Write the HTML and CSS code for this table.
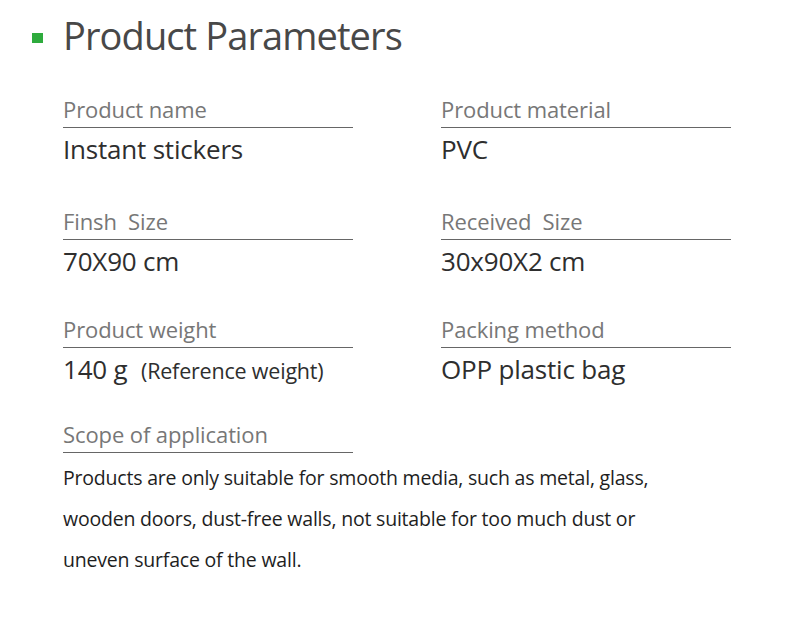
FILE: index.html
```html
<!DOCTYPE html>
<html lang="en">
<head>
<meta charset="utf-8">
<title>Product Parameters</title>
<link rel="stylesheet" href="styles.css">
</head>
<body>
<div class="page">
  <header class="heading">
    <span class="mark"></span>
    <h1 class="title">Product Parameters</h1>
  </header>
  <div class="params">
    <div class="row row-1">
      <div class="field">
        <div class="label">Product name</div>
        <div class="value">Instant stickers</div>
      </div>
      <div class="field">
        <div class="label">Product material</div>
        <div class="value">PVC</div>
      </div>
    </div>
    <div class="row row-2">
      <div class="field">
        <div class="label">Finsh&nbsp; Size</div>
        <div class="value">70X90 cm</div>
      </div>
      <div class="field">
        <div class="label">Received&nbsp; Size</div>
        <div class="value">30x90X2 cm</div>
      </div>
    </div>
    <div class="row row-3">
      <div class="field">
        <div class="label">Product weight</div>
        <div class="value">140 g <span class="note">(Reference weight)</span></div>
      </div>
      <div class="field">
        <div class="label">Packing method</div>
        <div class="value">OPP plastic bag</div>
      </div>
    </div>
    <div class="scope">
      <div class="label">Scope of application</div>
      <p class="desc">Products are only suitable for smooth media, such as metal, glass,<br>wooden doors, dust-free walls, not suitable for too much dust or<br>uneven surface of the wall.</p>
    </div>
  </div>
</div>
</body>
</html>
```
FILE: styles.css
```css
* { box-sizing: border-box; }
html, body { margin: 0; padding: 0; background: #fff; }
body { font-family: "Open Sans", "Noto Sans", sans-serif; }

.page {
  width: 790px;
  height: 618px;
  padding: 11px 0 0 32px;
}

.heading {
  display: flex;
  align-items: flex-start;
  gap: 20px;
}
.mark {
  flex: none;
  width: 11px;
  height: 10px;
  margin-top: 22px;
  background: #2eab3d;
}
.title {
  margin: 0;
  font-size: 38px;
  line-height: 48px;
  font-weight: 400;
  color: #484848;
  letter-spacing: -0.9px;
}

.params {
  padding-left: 31px;
  margin-top: 37px;
}
.row {
  display: grid;
  grid-template-columns: 290px 290px;
  column-gap: 88px;
}
.row-2 { margin-top: 38px; }
.row-3 { margin-top: 34px; }
.scope { margin-top: 29px; width: 290px; }

.label {
  font-size: 22px;
  line-height: 26px;
  color: #777;
  padding-bottom: 5px;
  border-bottom: 1px solid #666;
  letter-spacing: -0.1px;
  white-space: nowrap;
}
.value {
  font-size: 26px;
  line-height: 42px;
  color: #2e2e2e;
  letter-spacing: -0.2px;
  white-space: nowrap;
}
.note {
  font-size: 21.5px;
  margin-left: 7px;
  letter-spacing: -0.2px;
}
.desc {
  margin: 4px 0 0;
  width: 700px;
  font-size: 19.5px;
  line-height: 41px;
  color: #1e1e1e;
  letter-spacing: -0.2px;
}
```
